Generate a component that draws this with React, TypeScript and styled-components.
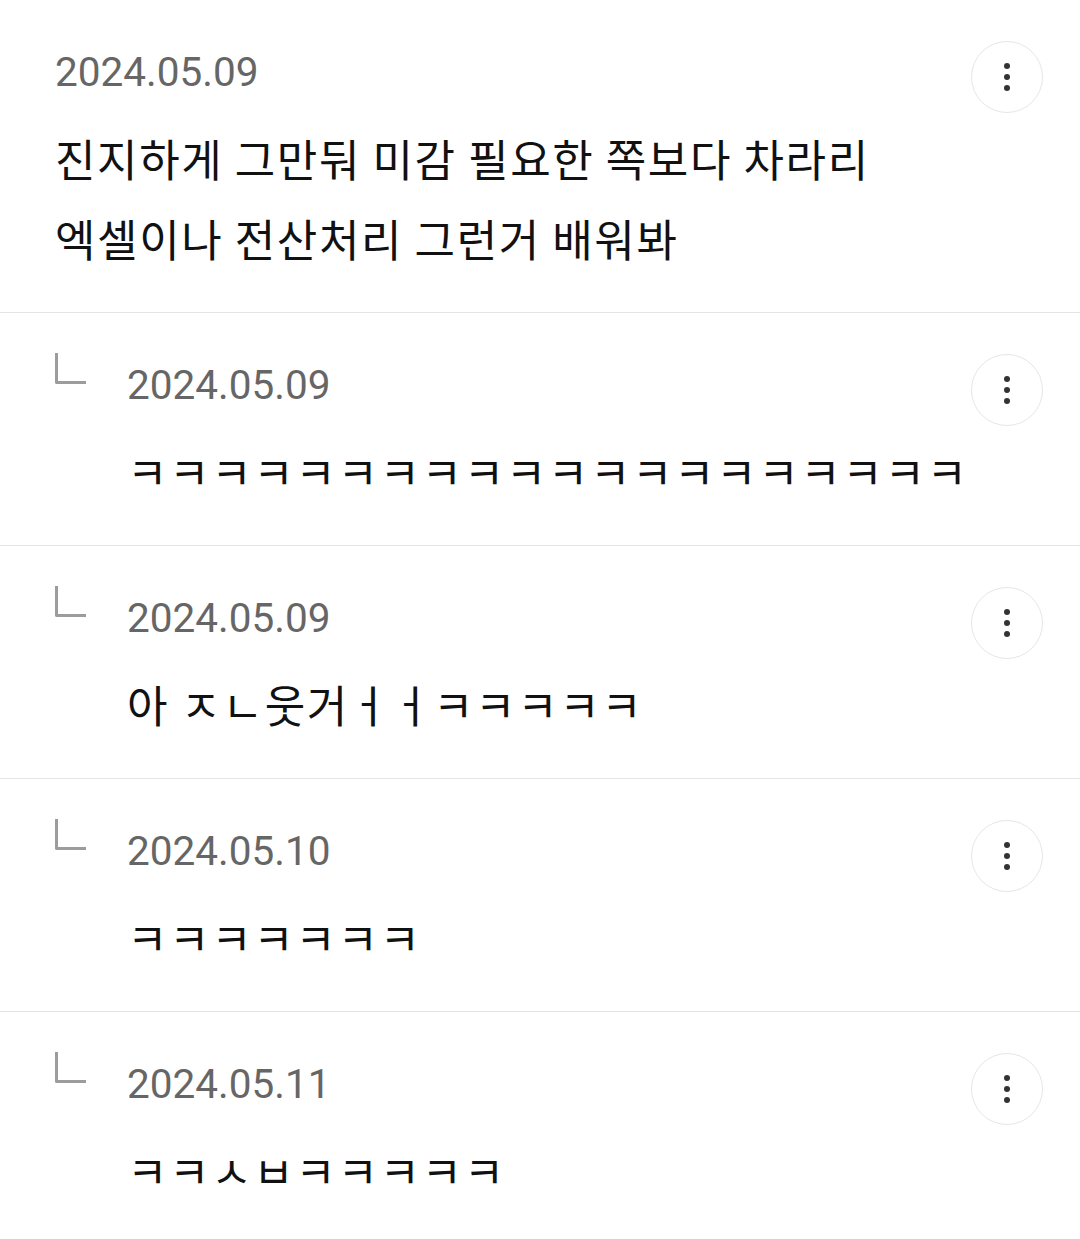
import * as React from 'react';
import styled, { createGlobalStyle } from 'styled-components';

const GlobalStyle = createGlobalStyle`
  html, body {
    margin: 0;
    padding: 0;
    background: #ffffff;
  }
  body {
    font-family: 'Noto Sans CJK KR', 'Noto Sans', sans-serif;
    -webkit-font-smoothing: antialiased;
  }
`;

type Comment = {
  date: string;
  text: string[];
  reply?: boolean;
};

const COMMENTS: Comment[] = [
  {
    date: '2024.05.09',
    text: ['진지하게 그만둬 미감 필요한 쪽보다 차라리', '엑셀이나 전산처리 그런거 배워봐'],
  },
  { date: '2024.05.09', text: ['ㅋㅋㅋㅋㅋㅋㅋㅋㅋㅋㅋㅋㅋㅋㅋㅋㅋㅋㅋㅋ'], reply: true },
  { date: '2024.05.09', text: ['아 ㅈㄴ웃거ㅓㅓㅋㅋㅋㅋㅋ'], reply: true },
  { date: '2024.05.10', text: ['ㅋㅋㅋㅋㅋㅋㅋ'], reply: true },
  { date: '2024.05.11', text: ['ㅋㅋㅅㅂㅋㅋㅋㅋㅋ'], reply: true },
];

const List = styled.ul`
  list-style: none;
  margin: 0;
  padding: 0;
  width: 1080px;
`;

const Item = styled.li`
  display: flex;
  align-items: flex-start;
  padding: 42px 37px 34px 55px;
  border-bottom: 1px solid #e4e4e4;
`;

const ReplyMark = styled.span`
  flex: none;
  width: 28px;
  height: 28px;
  margin-top: -2px;
  margin-right: 41px;
  border-left: 3px solid #9c9c9c;
  border-bottom: 3px solid #9c9c9c;
  border-bottom-left-radius: 2px;
`;

const Content = styled.div`
  flex: 1;
  min-width: 0;
`;

const DateLine = styled.div`
  font-family: Roboto, 'Liberation Sans', sans-serif;
  font-size: 40.5px;
  line-height: 60px;
  color: #666666;
`;

const Body = styled.p<{ $first: boolean }>`
  margin: ${({ $first }) => ($first ? '16px' : '0')} 0 0;
  font-size: 44px;
  letter-spacing: 1.6px;
  line-height: 80px;
  color: #111111;
  white-space: pre;
`;

const MoreButton = styled.button`
  flex: none;
  width: 72px;
  height: 72px;
  margin-top: -1px;
  border-radius: 50%;
  border: 1.5px solid #e6e6e6;
  background: #ffffff;
  display: flex;
  flex-direction: column;
  align-items: center;
  justify-content: center;
  gap: 5px;
  padding: 0;
`;

const Dot = styled.span`
  width: 6px;
  height: 6px;
  border-radius: 50%;
  background: #333333;
`;

const App: React.FC = () => (
  <>
    <GlobalStyle />
    <List>
      {COMMENTS.map((c, i) => (
        <Item key={i}>
          {c.reply && <ReplyMark />}
          <Content>
            <DateLine>{c.date}</DateLine>
            {c.text.map((line, j) => (
              <Body key={j} $first={j === 0}>
                {line}
              </Body>
            ))}
          </Content>
          <MoreButton aria-label="더보기">
            <Dot />
            <Dot />
            <Dot />
          </MoreButton>
        </Item>
      ))}
    </List>
  </>
);

export default App;
